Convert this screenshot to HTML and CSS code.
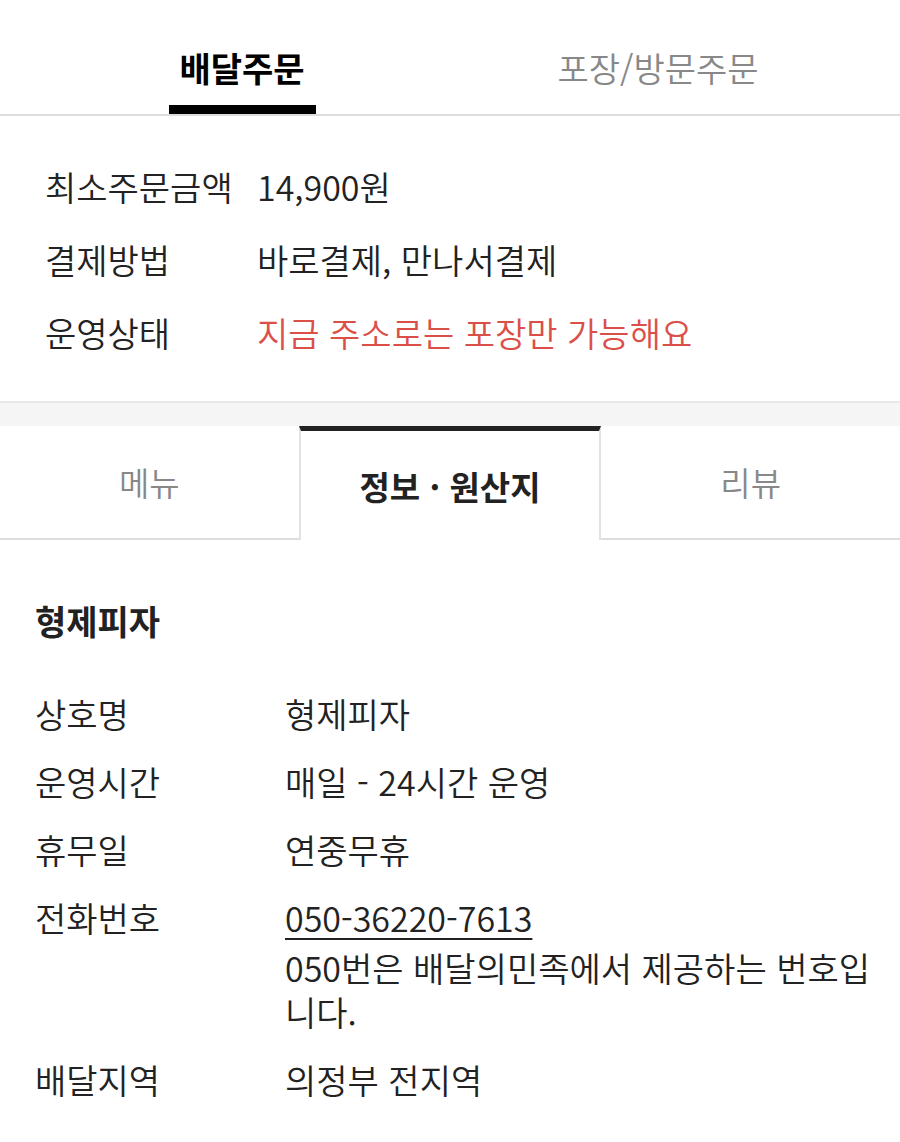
FILE: index.html
```html
<!DOCTYPE html>
<html lang="ko">
<head>
<meta charset="utf-8">
<title>형제피자</title>
<link rel="stylesheet" href="styles.css">
</head>
<body>
<div class="page">
  <nav class="order-tabs">
    <div class="order-tab active"><span class="order-label">배달주문</span><span class="order-bar"></span></div>
    <div class="order-tab"><span class="order-label">포장/방문주문</span></div>
  </nav>

  <section class="summary">
    <div class="summary-row"><span class="summary-key">최소주문금액</span><span class="summary-val">14,900원</span></div>
    <div class="summary-row"><span class="summary-key">결제방법</span><span class="summary-val">바로결제, 만나서결제</span></div>
    <div class="summary-row"><span class="summary-key">운영상태</span><span class="summary-val warn">지금 주소로는 포장만 가능해요</span></div>
  </section>

  <div class="divider"></div>

  <nav class="sub-tabs">
    <div class="sub-tab">메뉴</div>
    <div class="sub-tab active">정보 · 원산지</div>
    <div class="sub-tab">리뷰</div>
  </nav>

  <section class="info">
    <h2 class="info-title">형제피자</h2>
    <div class="info-list">
      <div class="info-row"><div class="info-key">상호명</div><div class="info-val">형제피자</div></div>
      <div class="info-row"><div class="info-key">운영시간</div><div class="info-val">매일 - 24시간 운영</div></div>
      <div class="info-row"><div class="info-key">휴무일</div><div class="info-val">연중무휴</div></div>
      <div class="info-row"><div class="info-key">전화번호</div><div class="info-val"><a class="phone" href="#">050-36220-7613</a><p class="note">050번은 배달의민족에서 제공하는 번호입니다.</p></div></div>
      <div class="info-row"><div class="info-key">배달지역</div><div class="info-val">의정부 전지역</div></div>
    </div>
  </section>
</div>
</body>
</html>
```

FILE: styles.css
```css
* { box-sizing: border-box; }
html, body { margin: 0; padding: 0; background: #fff; }
body {
  font-family: "Noto Sans CJK KR", "Noto Sans", sans-serif;
  color: #222;
  font-size: 34px;
  font-weight: 350;
  line-height: 44px;
}
.page { width: 900px; }

.order-tabs {
  display: flex;
  padding: 0 34px;
  border-bottom: 2px solid #ddd;
}
.order-tab {
  flex: 1;
  display: flex;
  flex-direction: column;
  align-items: center;
  padding-top: 46px;
  height: 114px;
}
.order-label {
  font-size: 34px;
  color: #888;
}
.order-tab.active .order-label { color: #000; font-weight: 700; }
.order-bar {
  margin-top: 15px;
  width: 147px;
  height: 9px;
  background: #000;
}

.summary {
  padding: 49px 45px 46px;
  display: flex;
  flex-direction: column;
  gap: 29px;
}
.summary-row { display: flex; }
.summary-key { width: 212px; flex: none; }
.summary-val { flex: 1; }
.summary-val.warn { color: #db4f49; }

.divider {
  height: 25px;
  background: #f5f5f5;
  border-top: 2px solid #e8e8e8;
}

.sub-tabs { display: flex; height: 114px; }
.sub-tab {
  flex: 1;
  display: flex;
  align-items: center;
  justify-content: center;
  color: #888;
  font-size: 33px;
  border-bottom: 2px solid #ddd;
}
.sub-tab.active {
  color: #222;
  font-weight: 700;
  border-bottom: none;
  border-top: 5px solid #222;
  border-left: 2px solid #e2e2e2;
  border-right: 2px solid #e2e2e2;
}

.info { padding: 59px 20px 40px 35px; }
.info-title {
  margin: 0 0 49px;
  font-size: 34px;
  line-height: 44px;
  font-weight: 700;
}
.info-list { display: flex; flex-direction: column; gap: 24px; }
.info-row { display: flex; }
.info-key { width: 250px; flex: none; }
.info-val { flex: 1; }
.phone {
  display: inline-block;
  color: #222;
  text-decoration: underline;
  text-underline-offset: 6px;
  text-decoration-thickness: 2px;
  margin-bottom: 6px;
}
.note { margin: 0; }
```
